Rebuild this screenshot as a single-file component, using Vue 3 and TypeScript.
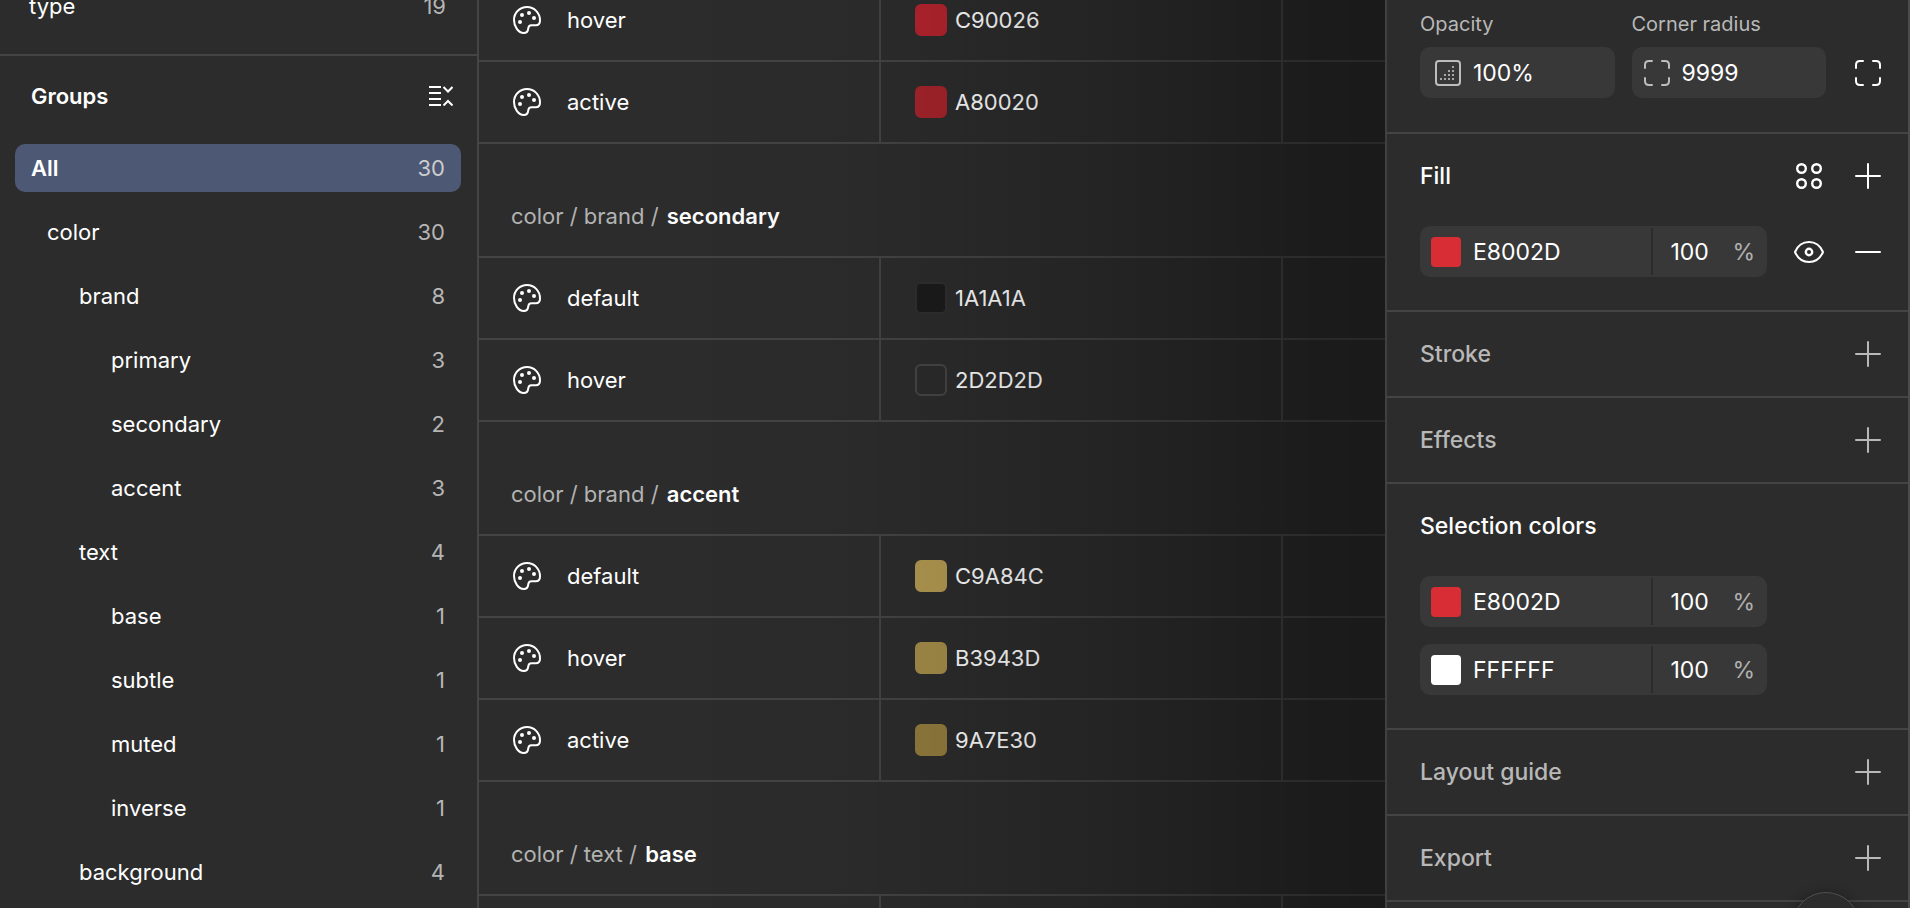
<script setup lang="ts">
interface Group {
  name: string
  count: number
  depth: number
}
interface Variable {
  name: string
  hex: string
  swatch: string
  edge?: string
}
interface VariableGroup {
  path: string
  leaf: string
  rows: Variable[]
}

const groups: Group[] = [
  { name: 'All', count: 30, depth: 0 },
  { name: 'color', count: 30, depth: 1 },
  { name: 'brand', count: 8, depth: 2 },
  { name: 'primary', count: 3, depth: 3 },
  { name: 'secondary', count: 2, depth: 3 },
  { name: 'accent', count: 3, depth: 3 },
  { name: 'text', count: 4, depth: 2 },
  { name: 'base', count: 1, depth: 3 },
  { name: 'subtle', count: 1, depth: 3 },
  { name: 'muted', count: 1, depth: 3 },
  { name: 'inverse', count: 1, depth: 3 },
  { name: 'background', count: 4, depth: 2 },
]

const variableGroups: VariableGroup[] = [
  {
    path: '',
    leaf: '',
    rows: [
      { name: 'hover', hex: 'C90026', swatch: '#b5242e' },
      { name: 'active', hex: 'A80020', swatch: '#a6242b' },
    ],
  },
  {
    path: 'color / brand /',
    leaf: 'secondary',
    rows: [
      { name: 'default', hex: '1A1A1A', swatch: '#1b1b1b', edge: '#2f2f2f' },
      { name: 'hover', hex: '2D2D2D', swatch: '#2c2c2c', edge: '#464646' },
    ],
  },
  {
    path: 'color / brand /',
    leaf: 'accent',
    rows: [
      { name: 'default', hex: 'C9A84C', swatch: '#b39a51' },
      { name: 'hover', hex: 'B3943D', swatch: '#a58d49' },
      { name: 'active', hex: '9A7E30', swatch: '#937c3e' },
    ],
  },
  { path: 'color / text /', leaf: 'base', rows: [] },
]

const selectionColors = [
  { hex: 'E8002D', swatch: '#d92d36' },
  { hex: 'FFFFFF', swatch: '#ffffff' },
]
</script>

<template>
  <div class="app">
    <aside class="sidebar">
      <div class="collection">
        <span>type</span>
        <span class="count">19</span>
      </div>
      <header class="groups-head">
        <h2>Groups</h2>
        <button type="button" class="icon-btn" aria-label="Collapse groups">
          <svg width="24" height="20" viewBox="0 0 24 20" fill="none" stroke="#fff" stroke-width="2">
            <path d="M0 1h12M0 7h12M0 13h12M0 19h12M14.500 1l4.500 4.500L23.500 1M14.500 19.500l4.500-4.500 4.500 4.500" />
          </svg>
        </button>
      </header>
      <nav class="tree">
        <button
          v-for="g in groups"
          :key="g.name"
          type="button"
          class="tree-row"
          :class="['depth-' + g.depth, { selected: g.depth === 0 }]"
        >
          <span>{{ g.name }}</span>
          <span class="count">{{ g.count }}</span>
        </button>
      </nav>
    </aside>

    <main class="variables">
      <table>
        <colgroup>
          <col class="col-name" />
          <col class="col-value" />
          <col />
        </colgroup>
        <tbody v-for="vg in variableGroups" :key="vg.leaf">
          <tr v-if="vg.leaf" class="group-row">
            <th colspan="3" scope="rowgroup">{{ vg.path }} <b>{{ vg.leaf }}</b></th>
          </tr>
          <tr v-for="v in vg.rows" :key="v.name">
            <td>
              <div class="name-cell">
                <svg width="28" height="28" viewBox="0 0 28 28" fill="none">
                  <path
                    d="M14 1C6.800 1 1 6.800 1 14c0 6.400 4.200 13 9.800 13 2.900 0 4.200-1.900 4.400-4.400.2-2.300.9-3.400 3.300-3.400h4.300c2.700 0 4.200-1.900 4.200-4.800C27 6.800 21.200 1 14 1z"
                    stroke="#fff"
                    stroke-width="2"
                  />
                  <g fill="#fff">
                    <circle cx="9" cy="9" r="2" />
                    <circle cx="16" cy="7" r="2" />
                    <circle cx="21" cy="12" r="2" />
                    <circle cx="7" cy="16" r="2" />
                  </g>
                </svg>
                <span>{{ v.name }}</span>
              </div>
            </td>
            <td>
              <div class="value-cell">
                <i class="swatch" :style="{ background: v.swatch, borderColor: v.edge ?? v.swatch }"></i>
                <span>{{ v.hex }}</span>
              </div>
            </td>
            <td></td>
          </tr>
          <tr v-if="!vg.rows.length">
            <td></td>
            <td></td>
            <td></td>
          </tr>
        </tbody>
      </table>
    </main>

    <aside class="inspector">
      <section class="appearance">
        <div class="field">
          <label for="opacity">Opacity</label>
          <div class="box">
            <svg width="26" height="26" viewBox="0 0 26 26" fill="none">
              <rect x="1" y="1" width="24" height="24" rx="3" stroke="#bdbdbd" stroke-width="2" />
              <path
                d="M5 19h2m2 0h2m2 0h2m2 0h2M9 15h2m2 0h2m2 0h2M13 11h2m2 0h2M17 7h2"
                stroke="#a8a8a8"
                stroke-width="2"
              />
            </svg>
            <input id="opacity" type="text" value="100%" />
          </div>
        </div>
        <div class="field">
          <label for="radius">Corner radius</label>
          <div class="box radius-box">
            <svg width="26" height="26" viewBox="0 0 26 26" fill="none" stroke="#bdbdbd" stroke-width="2">
              <path d="M1 8V5q0-4 4-4h3M18 1h3q4 0 4 4v3M25 18v3q0 4-4 4h-3M8 25H5q-4 0-4-4v-3" stroke-linecap="round" />
            </svg>
            <input id="radius" type="text" value="9999" />
          </div>
        </div>
        <button type="button" class="icon-btn corner-btn" aria-label="Individual corners">
          <svg width="26" height="26" viewBox="0 0 26 26" fill="none" stroke="#fff" stroke-width="2">
            <path d="M1 8V5q0-4 4-4h3M18 1h3q4 0 4 4v3M25 18v3q0 4-4 4h-3M8 25H5q-4 0-4-4v-3" stroke-linecap="round" />
          </svg>
        </button>
      </section>

      <section>
        <header class="section-head active">
          <h2>Fill</h2>
          <button type="button" class="icon-btn" aria-label="Apply styles">
            <svg width="26" height="26" viewBox="0 0 26 26" fill="none" stroke="#fff" stroke-width="2.400">
              <circle cx="5.500" cy="5.500" r="4.300" />
              <circle cx="20.500" cy="5.500" r="4.300" />
              <circle cx="5.500" cy="20.500" r="4.300" />
              <circle cx="20.500" cy="20.500" r="4.300" />
            </svg>
          </button>
          <button type="button" class="icon-btn" aria-label="Add fill">
            <svg width="26" height="26" viewBox="0 0 26 26" stroke="currentColor" stroke-width="2">
              <path d="M1 13h24M13 1v24" stroke-linecap="round" />
            </svg>
          </button>
        </header>
        <div class="paint-list">
          <div class="paint">
            <div class="paint-box">
              <i class="chip red"></i>
              <input type="text" class="hex" value="E8002D" aria-label="Fill color" />
              <input type="text" class="alpha" value="100" aria-label="Fill opacity" />
              <span class="unit">%</span>
            </div>
            <div class="paint-actions">
              <button type="button" class="icon-btn" aria-label="Toggle visibility">
                <svg width="30" height="24" viewBox="0 0 30 24" fill="none" stroke="#fff" stroke-width="2">
                  <path d="M1 12C4 5 9 2 15 2s11 3 14 10c-3 7-8 10-14 10S4 19 1 12z" stroke-linejoin="round" />
                  <circle cx="15" cy="12" r="3.200" stroke-width="2.400" />
                </svg>
              </button>
              <button type="button" class="icon-btn" aria-label="Remove fill">
                <svg width="26" height="26" viewBox="0 0 26 26" stroke="#fff" stroke-width="2">
                  <path d="M1 13h24" stroke-linecap="round" />
                </svg>
              </button>
            </div>
          </div>
        </div>
      </section>

      <section v-for="title in ['Stroke', 'Effects']" :key="title">
        <header class="section-head">
          <h2>{{ title }}</h2>
          <button type="button" class="icon-btn" :aria-label="'Add ' + title">
            <svg width="26" height="26" viewBox="0 0 26 26" stroke="currentColor" stroke-width="2">
              <path d="M1 13h24M13 1v24" stroke-linecap="round" />
            </svg>
          </button>
        </header>
      </section>

      <section>
        <header class="section-head active">
          <h2>Selection colors</h2>
        </header>
        <div class="paint-list">
          <div v-for="c in selectionColors" :key="c.hex" class="paint">
            <div class="paint-box">
              <i class="chip" :style="{ background: c.swatch }"></i>
              <input type="text" class="hex" :value="c.hex" :aria-label="'Color ' + c.hex" />
              <input type="text" class="alpha" value="100" :aria-label="'Opacity of ' + c.hex" />
              <span class="unit">%</span>
            </div>
          </div>
        </div>
      </section>

      <section v-for="title in ['Layout guide', 'Export']" :key="title">
        <header class="section-head">
          <h2>{{ title }}</h2>
          <button type="button" class="icon-btn" :aria-label="'Add ' + title">
            <svg width="26" height="26" viewBox="0 0 26 26" stroke="currentColor" stroke-width="2">
              <path d="M1 13h24M13 1v24" stroke-linecap="round" />
            </svg>
          </button>
        </header>
      </section>
      <button type="button" class="help" aria-label="Help"></button>
    </aside>
  </div>
</template>

<style>
html,
body,
#app {
  height: 100%;
  background: #2c2c2c;
}
</style>

<style scoped>
* {
  box-sizing: border-box;
}
.app {
  display: flex;
  height: 100%;
  overflow: hidden;
  background: #2c2c2c;
  color: #fff;
  font: 400 22px/32px Inter, 'Liberation Sans', sans-serif;
}
button,
input {
  margin: 0;
  padding: 0;
  border: 0;
  background: none;
  color: inherit;
  font: inherit;
}
h2 {
  margin: 0;
  font-size: inherit;
}
svg {
  display: block;
  flex: none;
}
.icon-btn {
  display: flex;
  align-items: center;
  justify-content: center;
  flex: none;
  width: 26px;
  height: 26px;
}
.count {
  color: #b5b5b5;
}

/* Left: collections and groups */
.sidebar {
  flex: none;
  width: 479px;
  border-right: 2px solid #444;
  overflow: hidden;
}
.collection {
  display: flex;
  justify-content: space-between;
  align-items: flex-start;
  height: 56px;
  padding: 0 31px 0 29px;
  border-bottom: 2px solid #444;
  line-height: 13px;
}
.groups-head {
  display: flex;
  align-items: center;
  justify-content: space-between;
  height: 80px;
  padding: 0 23px 0 31px;
}
.groups-head h2 {
  font-weight: 600;
}
.tree {
  display: flex;
  flex-direction: column;
  gap: 16px;
  padding: 8px 16px 0 15px;
}
.tree-row {
  display: flex;
  align-items: center;
  justify-content: space-between;
  height: 48px;
  padding: 0 16px;
  border-radius: 10px;
  text-align: left;
}
.tree-row.selected {
  background: #4d5875;
  font-weight: 600;
}
.tree-row.selected .count {
  color: #ccc;
  font-weight: 400;
}
.depth-1 {
  padding-left: 32px;
}
.depth-2 {
  padding-left: 64px;
}
.depth-3 {
  padding-left: 96px;
}

/* Middle: variable table, fading into shadow towards the inspector */
.variables {
  position: relative;
  flex: 1;
  min-width: 0;
  overflow: hidden;
}
.variables::after {
  content: '';
  position: absolute;
  inset: 0;
  background: linear-gradient(
    90deg,
    rgba(0, 0, 0, 0) 20%,
    rgba(0, 0, 0, 0.04) 40%,
    rgba(0, 0, 0, 0.11) 55%,
    rgba(0, 0, 0, 0.19) 69%,
    rgba(0, 0, 0, 0.3) 83%,
    rgba(0, 0, 0, 0.39) 93%,
    rgba(0, 0, 0, 0.41) 100%
  );
  pointer-events: none;
}
table {
  width: 100%;
  margin-top: -20px;
  border-collapse: separate;
  border-spacing: 0;
  table-layout: fixed;
}
.col-name {
  width: 400px;
}
.col-value {
  width: 402px;
}
td,
th {
  height: 82px;
  padding: 0;
  border-bottom: 2px solid #444;
}
td + td {
  border-left: 2px solid #444;
}
th {
  height: 114px;
  padding: 0 32px 24px;
  color: #b3b3b3;
  font-weight: 400;
  text-align: left;
  vertical-align: bottom;
}
th b {
  margin-left: 2px;
  color: #fff;
  font-weight: 600;
}
.name-cell,
.value-cell {
  display: flex;
  align-items: center;
}
.name-cell {
  gap: 26px;
  padding-left: 34px;
}
.value-cell {
  gap: 8px;
  padding-left: 34px;
}
.swatch {
  width: 32px;
  height: 32px;
  border: 2px solid;
  border-radius: 6px;
}

/* Right: inspector */
.inspector {
  position: relative;
  flex: none;
  width: 525px;
  border-left: 2px solid #404040;
  border-right: 2px solid #4c4c4c;
  overflow: hidden;
  font-size: 23px;
  font-weight: 400;
}
section {
  border-bottom: 2px solid #444;
}
.appearance {
  display: flex;
  align-items: flex-end;
  gap: 17px;
  height: 134px;
  padding: 0 27px 34px 33px;
}
.field {
  flex: 1;
  min-width: 0;
}
.field label {
  display: block;
  margin-bottom: 7px;
  color: #b8b8b8;
  font-size: 20px;
}
.box {
  display: flex;
  align-items: center;
  gap: 12px;
  height: 51px;
  padding-left: 15px;
  border-radius: 10px;
  background: #383838;
}
.radius-box {
  padding-left: 12px;
}
.box input {
  flex: 1;
  min-width: 0;
}
.corner-btn {
  margin: 0 0 12px 12px;
}
.section-head {
  display: flex;
  align-items: center;
  gap: 33px;
  height: 84px;
  padding: 0 27px 0 33px;
  color: #b8b8b8;
}
.section-head h2 {
  flex: 1;
  font-weight: 500;
}
.section-head.active {
  color: #fff;
}
.paint-list {
  display: flex;
  flex-direction: column;
  gap: 17px;
  padding: 8px 27px 33px 33px;
}
.paint {
  display: flex;
  align-items: center;
  justify-content: space-between;
}
.paint-actions {
  display: flex;
  gap: 33px;
}
.paint-box {
  display: flex;
  align-items: center;
  flex: none;
  width: 347px;
  height: 51px;
  padding: 0 12px 0 11px;
  border-radius: 10px;
  background: #383838;
}
.chip {
  flex: none;
  width: 30px;
  height: 30px;
  margin-right: 12px;
  border-radius: 4px;
}
.chip.red {
  background: #d92d36;
}
.hex {
  flex: 1;
  min-width: 0;
  height: 47px;
  border-right: 2px solid #2c2c2c;
}
.alpha {
  width: 64px;
  padding-left: 17px;
  margin-right: 15px;
}
.unit {
  color: #b0b0b0;
}
.help {
  position: absolute;
  right: 48px;
  bottom: -52px;
  width: 68px;
  height: 68px;
  border: 1px solid #505050;
  border-radius: 50%;
  background: #2c2c2c;
  box-shadow: 0 0 12px rgba(0, 0, 0, 0.3);
}
</style>
